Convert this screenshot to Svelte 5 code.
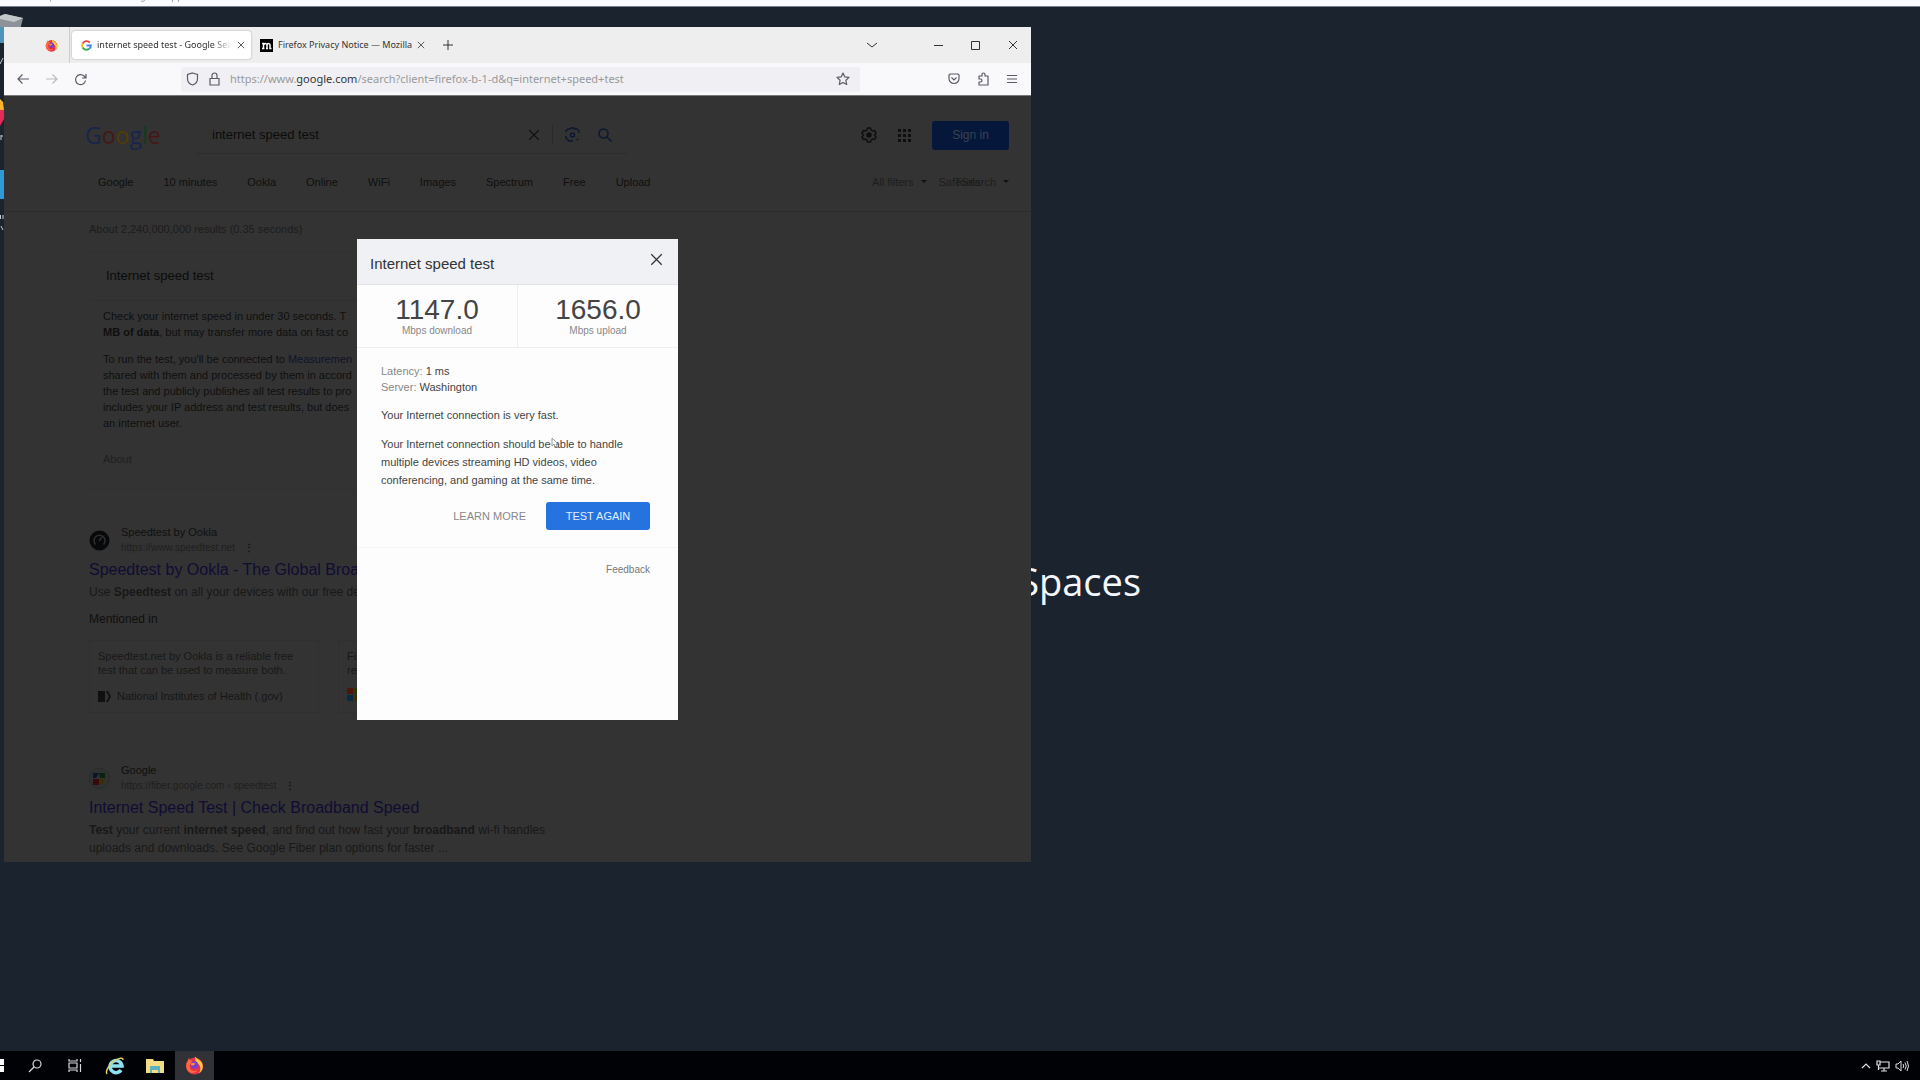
<script lang="ts">
  const chips = ["Google", "10 minutes", "Ookla", "Online", "WiFi", "Images", "Spectrum", "Free", "Upload"];
  const stats = [
    { value: "1147.0", label: "Mbps download" },
    { value: "1656.0", label: "Mbps upload" },
  ];
  const logo = [
    ["G", "blue"],
    ["o", "red"],
    ["o", "yellow"],
    ["g", "blue"],
    ["l", "green"],
    ["e", "red"],
  ];
  let query = "internet speed test";
  let url = "https://www.google.com/search?client=firefox-b-1-d&q=internet+speed+test";
</script>

{#snippet cross(size)}
  <svg width={size} height={size} viewBox="0 0 10 10" fill="none" stroke="currentColor"><path d="M1 1l8 8M9 1l-8 8" /></svg>
{/snippet}

{#snippet firefox(size)}
  <svg width={size} height={size} viewBox="0 0 20 20">
    <circle cx="10" cy="10.5" r="9" fill="#e8304f" />
    <path d="M11 .5c1 2.5 4 3 6 5.500c3 4 2 10-2.500 12.500 3-4 2-9-1.500-10.500C11 6 10 3.500 11 .5z" fill="#ffc93c" />
    <path d="M3 5l1-3 2 3 2 0c-1 2-3 3-3 6 0 4 4 6 8 4-2 4-9 4-11-1-1-3-1-6 1-9z" fill="#ff6a3a" />
    <circle cx="10" cy="9.500" r="4" fill="#7a3fd0" />
    <path d="M6 8c2-1 3-1 5 0-1 2-3 2-4 2z" fill="#ff9a3c" />
  </svg>
{/snippet}

<div class="screen">
  <header class="strip">
    <svg width="190" height="3" viewBox="0 0 190 3" fill="none" stroke="#a3a5aa"><path d="M50.500 0v1.500M141 1q2 1.500 4-1M172.500 0v2M178.500 0v2" /></svg>
  </header>

  <main class="desktop">
    <p class="wallpaper">WorkSpaces</p>
    <div class="shortcuts">
      <svg width="24" height="240" viewBox="0 0 24 240">
        <path d="M0 9l5-2 18 4-3 12H0z" fill="#8c9297" />
        <path d="M0 9l5-2 18 4-9 4-14-3z" fill="#c3c7ca" />
        <path d="M0 20h5v16H0z" fill="#4d94b8" />
        <path d="M0 92l3 3 1 8H0z" fill="#ffb52e" />
        <path d="M0 103h4v9l-4 7z" fill="#e62a55" />
        <path d="M0 163h4v29H0z" fill="#2f9ad8" />
        <path d="M3 51l-3 6M1 128v5M1 129h2M.5 208v4M3 208v4M1 219l2 4" fill="none" stroke="#c5ccd2" />
      </svg>
    </div>

    <section class="window">
      <div class="tabs">
        <button class="pinned" aria-label="Firefox View">{@render firefox(13)}</button>
        <div class="tab active">
          <svg width="11" height="11" viewBox="0 0 20 20" fill="none" stroke-width="3.500">
            <path d="M16 4.500A8 8 0 0 0 3 6.500" stroke="#ea4335" />
            <path d="M3 6.500a8 8 0 0 0 0 7" stroke="#fbbc05" />
            <path d="M3 13.500a8 8 0 0 0 12 2.500" stroke="#34a853" />
            <path d="M15 16a8 8 0 0 0 3-6h-8" stroke="#4285f4" />
          </svg>
          <span class="name fade">internet speed test - Google Sea</span>
          <button aria-label="Close tab">{@render cross(8)}</button>
        </div>
        <div class="tab">
          <svg width="13" height="13" viewBox="0 0 13 13">
            <path d="M0 0h13v13H0z" fill="#000" />
            <path d="M2 4.500h1.500V9.500M2 9.500h2.500M4 5.500c1-1.500 3-1 3 .5v3.500M6 9.500h2M7 5.500c1-1.500 3-1 3 .5v3.500h1.500" fill="none" stroke="#fff" stroke-width="1.500" />
          </svg>
          <span class="name">Firefox Privacy Notice — Mozilla</span>
          <button aria-label="Close tab">{@render cross(8)}</button>
        </div>
        <button class="new" aria-label="New tab">
          <svg width="10" height="10" viewBox="0 0 10 10" stroke="currentColor"><path d="M5 0v10M0 5h10" /></svg>
        </button>
        <div class="controls">
          <button class="list" aria-label="List all tabs">
            <svg width="12" height="12" viewBox="0 0 12 12" fill="none" stroke="currentColor"><path d="M1 4l5 4 5-4" /></svg>
          </button>
          <button aria-label="Minimize">
            <svg width="9" height="9" viewBox="0 0 9 9" stroke="currentColor"><path d="M0 4.500h9" /></svg>
          </button>
          <button aria-label="Maximize">
            <svg width="9" height="9" viewBox="0 0 9 9" fill="none" stroke="currentColor"><path d="M.5.5h8v8h-8z" /></svg>
          </button>
          <button aria-label="Close">{@render cross(10)}</button>
        </div>
      </div>

      <div class="toolbar">
        <div class="nav">
          <button aria-label="Back">
            <svg width="12" height="12" viewBox="0 0 12 12" fill="none" stroke="currentColor" stroke-width="1.200"><path d="M12 6H1M5.500 1.500L1 6l4.500 4.500" /></svg>
          </button>
          <button aria-label="Forward" disabled>
            <svg width="12" height="12" viewBox="0 0 12 12" fill="none" stroke="currentColor" stroke-width="1.200"><path d="M0 6h11M6.500 1.500L11 6l-4.500 4.500" /></svg>
          </button>
          <button aria-label="Reload">
            <svg width="13" height="13" viewBox="0 0 13 13" fill="none" stroke="currentColor" stroke-width="1.200"><path d="M11.500 7.500a5 5 0 1 1-1.500-4.500l2 2M12 1v4H8" /></svg>
          </button>
        </div>
        <div class="urlbar">
          <svg width="13" height="14" viewBox="0 0 13 14" fill="none" stroke="currentColor" stroke-width="1.200"><path d="M6.500 1l5 1.500v4c0 3-2 5.500-5 6.500-3-1-5-3.500-5-6.500v-4z" /></svg>
          <svg width="11" height="14" viewBox="0 0 11 14" fill="none" stroke="currentColor" stroke-width="1.200"><path d="M1 6.500h9V13H1zM3 6.500V3.500a2.500 2.500 0 0 1 5 0v3" /></svg>
          <a class="url" href={url}>https://www.<b>google.com</b>/search?client=firefox-b-1-d&amp;q=internet+speed+test</a>
          <button aria-label="Bookmark this page">
            <svg width="14" height="14" viewBox="0 0 14 14" fill="none" stroke="currentColor" stroke-width="1.200" stroke-linejoin="round"><path d="M7 1l1.800 3.900 4.200.5-3.100 2.900.8 4.200L7 10.400l-3.700 2.100.8-4.200L1 5.400l4.200-.5z" /></svg>
          </button>
        </div>
        <div class="actions">
          <button aria-label="Save to Pocket">
            <svg width="12" height="12" viewBox="0 0 12 12" fill="none" stroke="currentColor" stroke-width="1.200"><path d="M2 1h8l1 1v3.500a5 5 0 0 1-10 0V2zM3.500 4.500L6 7l2.500-2.500" /></svg>
          </button>
          <button aria-label="Extensions">
            <svg width="12" height="14" viewBox="0 0 12 14" fill="none" stroke="currentColor" stroke-width="1.200" stroke-linejoin="round"><path d="M5 4V2.500a1.500 1.500 0 0 1 3 0V4h3v9H2V10h1.500a1.500 1.500 0 0 0 0-3H2V4z" /></svg>
          </button>
          <button aria-label="Menu">
            <svg width="10" height="10" viewBox="0 0 10 10" stroke="currentColor"><path d="M0 1.500h10M0 5h10M0 8.500h10" /></svg>
          </button>
        </div>
      </div>

      <div class="page">
        <div class="masthead">
          <a class="logo" href="#home" aria-label="Google">{#each logo as [letter, color]}<span class={color}>{letter}</span>{/each}</a>
          <form class="search">
            <input aria-label="Search" bind:value={query} />
            <button type="button" aria-label="Clear">{@render cross(12)}</button>
            <i></i>
            <button type="button" class="lens" aria-label="Search by image">
              <svg width="15" height="15" viewBox="0 0 15 15" fill="none" stroke="currentColor" stroke-width="1.500"><path d="M1 5V4l2-2h2l1-1h3l1 1h2l2 2v2M1 9v2l3 3h4" /><circle cx="7.500" cy="8" r="2" /><circle cx="12.500" cy="12.500" r="1" fill="currentColor" stroke="none" /></svg>
            </button>
            <button type="button" class="go" aria-label="Search">
              <svg width="14" height="14" viewBox="0 0 14 14" fill="none" stroke="currentColor" stroke-width="1.500"><circle cx="5.500" cy="5.500" r="4.500" /><path d="M9 9l4.500 4.500" /></svg>
            </button>
          </form>
          <div class="account">
            <button aria-label="Settings">
              <svg width="16" height="16" viewBox="0 0 16 16" fill="none" stroke="currentColor" stroke-width="1.500" stroke-linejoin="round"><path d="M6.500 1h3l.5 2 1.500 1 2-.500 1.500 2.500-1.500 2 1.500 2-1.500 2.500-2-.500-1.500 1-.500 2h-3L6 13l-1.500-1-2 .500L1 10l1.500-2L1 6l1.500-2.500 2 .500L6 3z" /><circle cx="8" cy="8" r="2" fill="currentColor" /></svg>
            </button>
            <button aria-label="Google apps">
              <svg width="13" height="13" viewBox="0 0 13 13" fill="currentColor"><path d="M0 0h3v3H0zM5 0h3v3H5zM10 0h3v3h-3zM0 5h3v3H0zM5 5h3v3H5zM10 5h3v3h-3zM0 10h3v3H0zM5 10h3v3H5zM10 10h3v3h-3z" /></svg>
            </button>
            <button class="signin">Sign in</button>
          </div>
        </div>

        <nav class="chips">
          {#each chips as chip}
            <a href="#chip">{chip}</a>
          {/each}
          <div class="filters">
            <button>All filters</button>
            <button class="safe">SafeSearch<span>Tools</span></button>
          </div>
        </nav>

        <div class="results">
          <p class="count">About 2,240,000,000 results (0.35 seconds)</p>

          <article class="panel">
            <h2>Internet speed test</h2>
            <div class="info">
              <p>Check your internet speed in under 30 seconds. T<br /><b>MB of data</b>, but may transfer more data on fast co</p>
              <p>To run the test, you'll be connected to <a href="#mlab">Measuremen</a><br />shared with them and processed by them in accord<br />the test and publicly publishes all test results to pro<br />includes your IP address and test results, but does<br />an internet user.</p>
              <small>About</small>
            </div>
          </article>

          <article class="result">
            <div class="site">
              <svg width="21" height="21" viewBox="0 0 21 21"><circle cx="10.500" cy="10.500" r="10" fill="#08090b" /><path d="M6.500 14.500a5.500 5.500 0 1 1 8 0M10 11l3-4" fill="none" stroke="#303030" stroke-width="1.500" /></svg>
              <div><span>Speedtest by Ookla</span><cite>https://www.speedtest.net <b>⋮</b></cite></div>
            </div>
            <h3><a href="#ookla">Speedtest by Ookla - The Global Broa</a></h3>
            <p>Use <b>Speedtest</b> on all your devices with our free des</p>
            <h4>Mentioned in</h4>
            <div class="mentions">
              <div class="card">
                <p>Speedtest.net by Ookla is a reliable free test that can be used to measure both.</p>
                <div class="source">
                  <svg width="13" height="11" viewBox="0 0 13 11"><path d="M0 0h7v11H0zM8 0h2l3 5.500L10 11H8l3-5.500z" fill="#101010" /></svg>
                  National Institutes of Health (.gov)
                </div>
              </div>
              <div class="card">
                <p>Fi<br />re</p>
                <div class="source">
                  <svg width="13" height="13" viewBox="0 0 13 13"><path d="M0 0h6v6H0z" fill="#4d1509" /><path d="M7 0h6v6H7z" fill="#26370a" /><path d="M0 7h6v6H0z" fill="#0a2b3d" /><path d="M7 7h6v6H7z" fill="#3d2e05" /></svg>
                </div>
              </div>
            </div>
          </article>

          <article class="result">
            <div class="site">
              <svg width="21" height="21" viewBox="0 0 21 21"><circle cx="10.500" cy="10.500" r="10" fill="#303231" stroke="#292c2b" /><path d="M4 5l6 0-3 5-3 0z" fill="#0a1526" /><path d="M10 5h6v5h-5z" fill="#08220f" /><path d="M4 11h6v6H4z" fill="#350a08" /><path d="M11 11h5l-2 5h-3z" fill="#3b2c04" /></svg>
              <div><span>Google</span><cite>https://fiber.google.com › speedtest <b>⋮</b></cite></div>
            </div>
            <h3><a href="#fiber">Internet Speed Test | Check Broadband Speed</a></h3>
            <p><b>Test</b> your current <b>internet speed</b>, and find out how fast your <b>broadband</b> wi-fi handles<br />uploads and downloads. See Google Fiber plan options for faster ...</p>
          </article>
        </div>

        <div class="dialog" role="dialog" aria-label="Internet speed test">
          <header>
            <h2>Internet speed test</h2>
            <button aria-label="Close dialog">{@render cross(13)}</button>
          </header>
          <div class="stats">
            {#each stats as stat}
              <div><strong>{stat.value}</strong><span>{stat.label}</span></div>
            {/each}
          </div>
          <div class="details">
            <dl>
              <div><dt>Latency:</dt> <dd>1 ms</dd></div>
              <div><dt>Server:</dt> <dd>Washington</dd></div>
            </dl>
            <p>Your Internet connection is very fast.</p>
            <p>Your Internet connection should be able to handle multiple devices streaming HD videos, video conferencing, and gaming at the same time.</p>
            <div class="buttons">
              <button>LEARN MORE</button>
              <button class="primary">TEST AGAIN</button>
            </div>
          </div>
          <footer><a href="#feedback">Feedback</a></footer>
          <svg class="cursor" width="8" height="12" viewBox="0 0 8 12"><path d="M1 1v8l2-2 1 3 2-1-1-2h2z" fill="#fff" stroke="#999" /></svg>
        </div>
      </div>
    </section>
  </main>

  <footer class="taskbar">
    <button class="start" aria-label="Start">
      <svg width="4" height="13" viewBox="0 0 4 13" fill="#fff"><path d="M0 0h4v6H0zM0 7h4v6H0z" /></svg>
    </button>
    <button aria-label="Search">
      <svg width="14" height="14" viewBox="0 0 14 14" fill="none" stroke="#d8d8d8" stroke-width="1.200"><circle cx="9" cy="5" r="4" /><path d="M6 8l-5 5" /></svg>
    </button>
    <button aria-label="Task View">
      <svg width="14" height="13" viewBox="0 0 14 13" fill="none" stroke="#d8d8d8" stroke-width="1.200"><path d="M1 0v2h8V0M1 4h8v5H1zM1 13v-2h8v2M12.500 0v3M12.500 5v8" /></svg>
    </button>
    <button aria-label="Internet Explorer">
      <svg width="20" height="20" viewBox="0 0 20 20" fill="none">
        <path d="M16 14a6 6 0 1 1 1-4H6" stroke="#8fe0f3" stroke-width="3.500" />
        <path d="M2 18c-2-3 2-9 7-13 5-3 9-4 9-1" stroke="#d9d06a" stroke-width="1.500" />
      </svg>
    </button>
    <button aria-label="File Explorer">
      <svg width="18" height="16" viewBox="0 0 18 16"><path d="M0 1h7l1 2h10v12H0z" fill="#f3dc83" /><path d="M4 8h10v7h-2v-3H6v3H4z" fill="#5cb1bf" /></svg>
    </button>
    <button class="running" aria-label="Firefox">{@render firefox(19)}</button>
    <div class="tray">
      <svg width="10" height="7" viewBox="0 0 10 7" fill="none" stroke="#e0e0e0" stroke-width="1.200"><path d="M1 6l4-4 4 4" /></svg>
      <svg width="14" height="12" viewBox="0 0 14 12" fill="none" stroke="#e0e0e0" stroke-width="1.200"><path d="M4 2h9v6H3M8 8v3M5 11h6M1 1h3v4H1zM2.500 5v5" /></svg>
      <svg width="14" height="12" viewBox="0 0 14 12" fill="none" stroke="#e0e0e0"><path d="M1 4h2l3-3v10L3 8H1zM8 4q1.500 2 0 4M10 2.500q2.500 3.500 0 7M12 1q3 5 0 10" /></svg>
    </div>
  </footer>
</div>

<style>
  :global(body) {
    margin: 0;
    font-family: "Liberation Sans", Arial, sans-serif;
  }

  .screen {
    display: flex;
    flex-direction: column;
    height: 100vh;
    overflow: hidden;
    background: #1b242e;
  }

  button {
    display: flex;
    align-items: center;
    justify-content: center;
    padding: 0;
    border: 0;
    background: none;
    color: inherit;
    font: inherit;
  }

  a {
    color: inherit;
    text-decoration: none;
  }

  h2, h3, h4, p, dl, dd {
    margin: 0;
    font-weight: normal;
  }

  svg {
    flex: none;
  }

  .strip {
    display: flex;
    flex: none;
    height: 6px;
    background: #fafbff;
    border-bottom: 1px solid #76808a;
  }

  .desktop {
    position: relative;
    flex: 1;
  }

  .wallpaper {
    position: absolute;
    top: 546px;
    left: 1141px;
    transform: translateX(-100%);
    color: #f4f7ff;
    font: 500 38px/56px "Open Sans", sans-serif;
  }

  .shortcuts {
    position: absolute;
    top: 0;
    left: 0;
  }

  .window {
    position: absolute;
    top: 20px;
    left: 4px;
    display: flex;
    flex-direction: column;
    width: 1027px;
    height: 835px;
    overflow: hidden;
    background: #333;
  }

  .tabs {
    display: flex;
    align-items: center;
    height: 36px;
    background: #eee;
    color: #333;
    font: 9px/16px "Noto Sans", sans-serif;
  }

  .pinned {
    width: 66px;
    height: 36px;
    padding-left: 30px;
    border-right: 1px solid #ccc;
  }

  .tab {
    display: flex;
    align-items: center;
    gap: 5px;
    box-sizing: border-box;
    width: 179px;
    height: 28px;
    padding: 0 9px;
  }

  .active {
    margin-left: 2px;
    border-radius: 3px;
    background: #fff;
    box-shadow: 0 0 2px #999;
  }

  .name {
    flex: 1;
    white-space: nowrap;
  }

  .fade {
    mask-image: linear-gradient(to right, #000 85%, transparent);
  }

  .new {
    width: 36px;
  }

  .controls {
    display: flex;
    margin-left: auto;
  }

  .controls button {
    width: 37px;
    height: 36px;
  }

  .controls .list {
    margin-right: 30px;
  }

  .toolbar {
    display: flex;
    align-items: center;
    height: 32px;
    border-bottom: 1px solid #777;
    background: #f9f9fb;
    color: #5b5b66;
  }

  .nav {
    display: flex;
    width: 177px;
    padding-left: 4px;
    box-sizing: border-box;
  }

  .nav button,
  .actions button {
    width: 29px;
    height: 28px;
  }

  .nav button:disabled {
    opacity: 0.4;
  }

  .urlbar {
    display: flex;
    flex: 1;
    align-items: center;
    gap: 10px;
    height: 25px;
    padding: 0 10px 0 5px;
    border-radius: 3px;
    background: #f0f0f4;
  }

  .url {
    flex: 1;
    color: #999;
    font: 11px/16px "Noto Sans", sans-serif;
  }

  .url b {
    color: #333;
    font-weight: normal;
  }

  .actions {
    display: flex;
    justify-content: flex-end;
    width: 171px;
    padding-right: 5px;
    box-sizing: border-box;
  }

  .page {
    position: relative;
    flex: 1;
    color: #0f0f0f;
    font-size: 11px;
  }

  .masthead {
    display: flex;
    align-items: center;
    height: 62px;
    padding: 16px 22px 0 81px;
    box-sizing: border-box;
  }

  .logo {
    width: 110px;
    font: 500 23px/32px "Open Sans", sans-serif;
  }

  .blue { color: #16264b; }
  .red { color: #451716; }
  .yellow { color: #4f3c08; }
  .green { color: #123a1d; }

  .search {
    display: flex;
    align-items: center;
    width: 432px;
    height: 38px;
    padding: 0 15px 0 17px;
    box-sizing: border-box;
    border-bottom: 1px solid #2d2d2d;
  }

  .search input {
    flex: 1;
    min-width: 0;
    padding: 0;
    border: 0;
    outline: 0;
    background: none;
    color: #0b0b0b;
    font: 13px/20px "Liberation Sans", Arial, sans-serif;
  }

  .search i {
    width: 1px;
    height: 20px;
    margin: 0 12px;
    background: #292929;
  }

  .lens,
  .go {
    color: #0d1733;
  }

  .go {
    margin-left: 18px;
  }

  .account {
    display: flex;
    align-items: center;
    gap: 21px;
    margin-left: auto;
  }

  .signin {
    width: 77px;
    height: 29px;
    border-radius: 3px;
    background: #05173a;
    color: #3b4352;
    font-size: 12px;
  }

  .chips {
    display: flex;
    align-items: center;
    gap: 30px;
    height: 47px;
    padding: 0 22px 6px 94px;
    border-bottom: 1px solid #2c2c2c;
  }

  .filters {
    display: flex;
    gap: 12px;
    margin-left: auto;
    color: #1d1d1d;
  }

  .filters button::after {
    content: "";
    margin-left: 7px;
    border: 3px solid transparent;
    border-top-color: #111;
    border-bottom: 0;
  }

  .safe {
    position: relative;
  }

  .safe span {
    position: absolute;
    left: 16px;
  }

  .results {
    padding: 8px 0 0 85px;
  }

  .count {
    color: #1c1c1c;
    line-height: 18px;
  }

  .panel {
    width: 520px;
    height: 237px;
    margin-top: 13px;
    border: 1px solid #303030;
    border-width: 1px 0;
  }

  .panel h2 {
    padding: 0 17px;
    border-bottom: 1px solid #2f2f2f;
    color: #0b0b0b;
    font-size: 13px;
    line-height: 48px;
  }

  .info {
    padding: 7px 14px;
    line-height: 16px;
  }

  .info p {
    margin-bottom: 11px;
  }

  .info a {
    color: #12122b;
  }

  .info small {
    display: block;
    padding-top: 9px;
    color: #1f1f1f;
    font-size: 11px;
  }

  .result {
    width: 490px;
    padding-top: 35px;
  }

  .result + .result {
    padding-top: 50px;
  }

  .site {
    display: flex;
    align-items: center;
    gap: 11px;
  }

  .site span,
  .site cite {
    display: block;
    font-size: 11px;
    font-style: normal;
    line-height: 15px;
  }

  .site cite {
    color: #1f1f1f;
    font-size: 10px;
  }

  .site b {
    margin-left: 6px;
    color: #111;
  }

  h3 {
    margin-top: 2px;
    color: #100c33;
    font-size: 16px;
    line-height: 26px;
    white-space: nowrap;
  }

  .result > p {
    color: #181818;
    line-height: 18px;
  }

  .result > p {
    font-size: 12px;
  }

  h4 {
    margin-top: 9px;
    font-size: 12px;
    line-height: 18px;
  }

  .mentions {
    display: flex;
    gap: 19px;
    margin-top: 12px;
  }

  .card {
    width: 230px;
    padding: 8px;
    box-sizing: border-box;
    border: 1px solid #303030;
    color: #181818;
  }

  .card p {
    height: 28px;
    line-height: 14px;
  }

  .source {
    display: flex;
    align-items: center;
    gap: 6px;
    margin-top: 11px;
    color: #161616;
    line-height: 16px;
  }

  .dialog {
    position: absolute;
    top: 143px;
    left: 353px;
    width: 321px;
    height: 481px;
    background: #fdfdfe;
    color: #444;
  }

  .dialog header {
    display: flex;
    align-items: flex-start;
    justify-content: space-between;
    height: 31px;
    padding: 14px 15px 0 13px;
    border-bottom: 1px solid #e2e3e7;
    background: #f0f1f5;
    color: #333;
  }

  .dialog h2 {
    font-size: 15px;
    line-height: 22px;
  }

  .stats {
    display: flex;
    height: 62px;
    border-bottom: 1px solid #eee;
  }

  .stats div {
    display: flex;
    flex: 1;
    flex-direction: column;
    align-items: center;
    padding-top: 10px;
  }

  .stats div + div {
    border-left: 1px solid #eee;
  }

  .stats strong {
    font-size: 28px;
    font-weight: normal;
    line-height: 30px;
  }

  .stats span {
    color: #888;
    font-size: 10px;
    line-height: 12px;
  }

  .details {
    padding: 15px 28px 17px 24px;
    border-bottom: 1px solid #f4f4f4;
    line-height: 18px;
  }

  dl div {
    line-height: 16px;
  }

  dt, dd {
    display: inline;
    font-size: 11px;
  }

  dt {
    color: #888;
  }

  .details p {
    margin-top: 11px;
  }

  .buttons {
    display: flex;
    justify-content: flex-end;
    gap: 20px;
    margin-top: 13px;
    color: #888;
  }

  .primary {
    width: 104px;
    height: 28px;
    border-radius: 3px;
    background: #2672de;
    color: #e4efff;
  }

  .dialog footer {
    padding: 14px 28px;
    color: #777;
    font-size: 10px;
    line-height: 16px;
    text-align: right;
  }

  .cursor {
    position: absolute;
    top: 198px;
    left: 194px;
  }

  .taskbar {
    display: flex;
    flex: none;
    gap: 1px;
    height: 29px;
    background: #010206;
  }

  .taskbar button {
    width: 39px;
  }

  .taskbar .start {
    justify-content: flex-start;
    width: 14px;
  }

  .running {
    background: #303238;
  }

  .tray {
    display: flex;
    align-items: center;
    gap: 5px;
    margin-left: auto;
    padding-right: 11px;
  }
</style>
